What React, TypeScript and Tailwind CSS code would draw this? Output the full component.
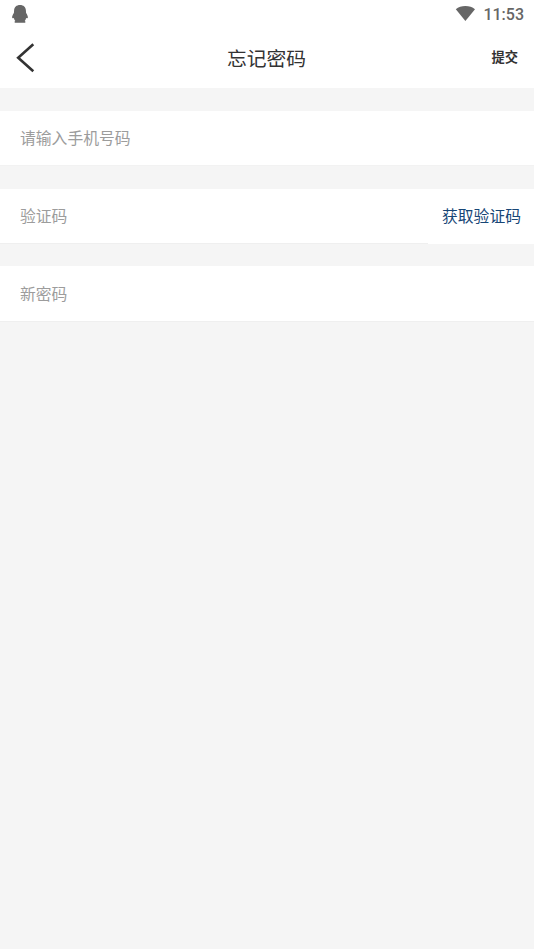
function StatusBar() {
  return (
    <div className="flex h-7 items-center justify-between pr-[10px] pl-3 text-[#666666]">
      <svg viewBox="0 0 16 18" className="mb-px h-[18px] w-4" fill="currentColor">
        <path d="M8 0C4.500 0 2.200 2.200 2.100 5.500L1.900 8C.9 9.400.2 11 .1 12.300c0 1 .6 1.300 1.200.9l.6-.2c.2 1.200.7 2.200 1.400 2.900-.6.300-.9.500-.8 1 .1.600.9.900 1.900.9h7.200c1 0 1.800-.3 1.900-.9.1-.5-.2-.7-.8-1 .7-.7 1.200-1.700 1.400-2.900l.6.200c.6.400 1.200.1 1.200-.9C15.800 11 15.100 9.400 14.100 8l-.2-2.500C13.800 2.200 11.500 0 8 0z" />
      </svg>
      <div className="flex items-center">
        <svg viewBox="0 0 20 16" className="mr-2 mb-px h-4 w-5" fill="currentColor">
          <path d="M.8 3.200C3.400.9 6.600 0 10.400 0s7 .9 9.600 3.200L10.400 15z" />
        </svg>
        <span className="pt-[2px] font-['Roboto',sans-serif] text-[16px] leading-[26px] font-medium">
          11:53
        </span>
      </div>
    </div>
  );
}

function Header() {
  return (
    <header className="grid h-[60px] grid-cols-3 items-center pr-4 pl-4 text-[#333333]">
      <button type="button" aria-label="返回">
        <svg
          viewBox="0 0 20 30"
          className="mb-px h-[30px] w-5"
          fill="none"
          stroke="currentColor"
          strokeWidth="2.6"
        >
          <path d="M17.300 1.300L2.200 14.800l15.100 13.500" />
        </svg>
      </button>
      <h1 className="pr-px text-center text-[19.800px] whitespace-nowrap">
        忘记密码
      </h1>
      <button
        type="button"
        className="pb-[2px] text-right text-[13.300px] font-bold"
      >
        提交
      </button>
    </header>
  );
}

const inputClass =
  "h-full min-w-0 flex-1 bg-transparent pb-px pl-5 text-[15.800px] text-[#333333] outline-none placeholder:text-[#9c9c9c]";

export default function App() {
  return (
    <div className="min-h-screen bg-[#f5f5f5] font-['Noto_Sans_CJK_SC',sans-serif]">
      <div className="bg-white">
        <StatusBar />
        <Header />
      </div>
      <form className="pt-[23px]">
        <div className="flex h-[55px] border-b border-[#f2f2f2] bg-white">
          <input type="tel" placeholder="请输入手机号码" className={inputClass} />
        </div>
        <div className="mt-[23px] flex h-[55px] bg-white">
          <div className="flex flex-1 border-b border-[#efefef]">
            <input type="text" placeholder="验证码" className={inputClass} />
          </div>
          <button
            type="button"
            className="w-[106px] pr-[13px] pb-px text-right text-[15.800px] whitespace-nowrap text-[#174676]"
          >
            获取验证码
          </button>
        </div>
        <div className="mt-[22px] flex h-14 border-b border-[#efefef] bg-white">
          <input type="password" placeholder="新密码" className={inputClass} />
        </div>
      </form>
    </div>
  );
}
